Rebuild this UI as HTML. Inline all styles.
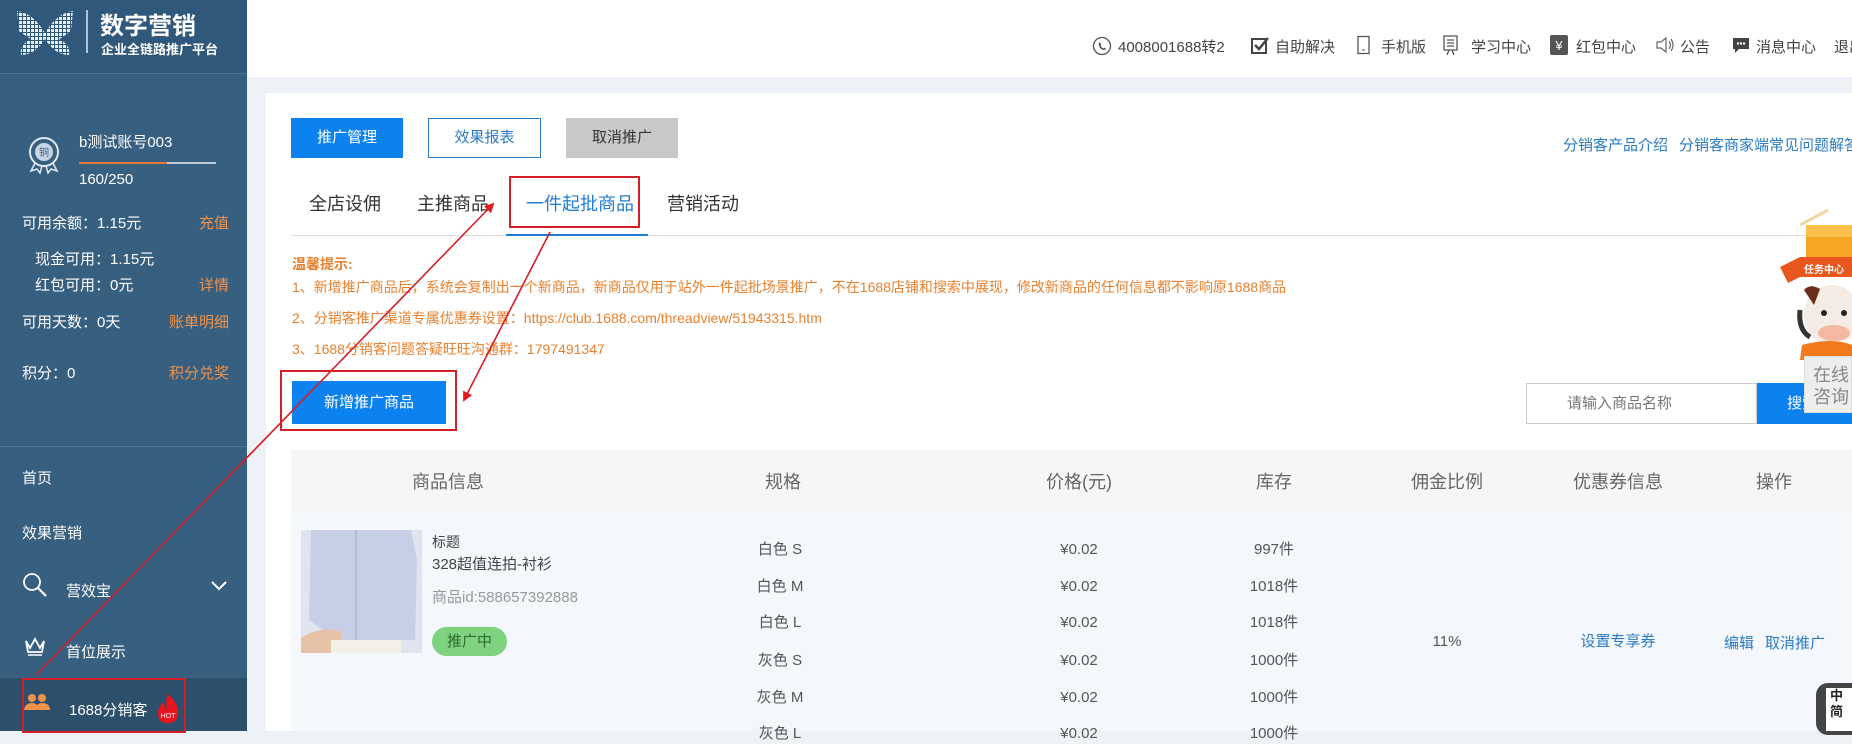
<!DOCTYPE html>
<html><head><meta charset="utf-8">
<style>
*{margin:0;padding:0;box-sizing:border-box}
body{width:1852px;height:731px;overflow:hidden;position:relative;background:#eef1f6;font-family:"Liberation Sans","Noto Sans CJK SC",sans-serif;color:#333}
.a{position:absolute;white-space:nowrap}
#side{position:absolute;left:0;top:0;width:247px;height:731px;background:#375f80}
#logo{position:absolute;left:0;top:0;width:247px;height:74px;background:#2f587a;border-bottom:1px solid #4a7496}
.sw{color:#fff;font-size:15px}
.or{color:#f0924a;font-size:15px}
.hd{font-size:15px;color:#444}
.tab{font-size:18px;color:#333}
.tip{font-size:14px;color:#e8802e}
.th{font-size:18px;color:#666;transform:translateX(-50%)}
.td{font-size:15px;color:#555;transform:translateX(-50%);line-height:20px;height:20px}
.lk{color:#2a7bc4}
</style></head><body>
<div id="side">
 <div id="logo">
  <svg class="a" style="left:15px;top:9px" width="60" height="48" viewBox="0 0 60 48">
   <defs><pattern id="d" width="4" height="4" patternUnits="userSpaceOnUse"><rect width="3" height="3" fill="#e8eef5"/></pattern>
   <clipPath id="b"><path d="M2 2 Q18 4 30 24 Q42 4 58 2 L56 22 Q48 28 44 30 Q56 36 54 46 Q40 46 30 30 Q20 46 6 46 Q4 36 16 30 Q12 28 4 22Z"/></clipPath></defs>
   <rect width="60" height="48" fill="url(#d)" clip-path="url(#b)"/>
  </svg>
  <div class="a" style="left:86px;top:10px;width:2px;height:43px;background:#a9c3da"></div>
  <div class="a" style="left:100px;top:6px;font-size:24px;font-weight:bold;color:#fff">数字营销</div>
  <div class="a" style="left:101px;top:39px;font-size:13px;font-weight:bold;color:#fff">企业全链路推广平台</div>
 </div>
 <svg class="a" style="left:27px;top:135px" width="34" height="40" viewBox="0 0 34 40"><circle cx="17" cy="17" r="14" fill="none" stroke="#dfe8f0" stroke-width="2"/><circle cx="17" cy="17" r="9" fill="#c7d5e2"/><text x="17" y="21" font-size="10" text-anchor="middle" fill="#375f80" font-family="Noto Sans CJK SC">铜</text><path d="M8 28 L4 36 L10 34 L13 38 L15 31 M26 28 L30 36 L24 34 L21 38 L19 31" fill="none" stroke="#dfe8f0" stroke-width="1.5"/></svg>
 <div class="a sw" style="left:79px;top:131px">b测试账号003</div>
 <div class="a" style="left:79px;top:162px;width:137px;height:2px;background:#b9cddd"></div>
 <div class="a" style="left:79px;top:162px;width:88px;height:2px;background:#e0783a"></div>
 <div class="a sw" style="left:79px;top:171px">160/250</div>
 <div class="a sw" style="left:22px;top:212px">可用余额：1.15元</div><div class="a or" style="left:199px;top:212px">充值</div>
 <div class="a sw" style="left:35px;top:248px">现金可用：1.15元</div>
 <div class="a sw" style="left:35px;top:274px">红包可用：0元</div><div class="a or" style="left:199px;top:274px">详情</div>
 <div class="a sw" style="left:22px;top:311px">可用天数：0天</div><div class="a or" style="left:169px;top:311px">账单明细</div>
 <div class="a sw" style="left:22px;top:362px">积分：0</div><div class="a or" style="left:169px;top:362px">积分兑奖</div>
 <div class="a" style="left:0;top:446px;width:247px;height:1px;background:#4d7798"></div>
 <div class="a sw" style="left:22px;top:467px">首页</div>
 <div class="a sw" style="left:22px;top:522px">效果营销</div>
 <svg class="a" style="left:22px;top:572px" width="26" height="26" viewBox="0 0 26 26"><circle cx="10" cy="10" r="8" fill="none" stroke="#fff" stroke-width="1.8"/><path d="M16 16 L24 24" stroke="#fff" stroke-width="2.2"/></svg>
 <div class="a sw" style="left:66px;top:580px">营效宝</div>
 <svg class="a" style="left:210px;top:580px" width="18" height="12"><path d="M2 2 L9 9 L16 2" fill="none" stroke="#fff" stroke-width="2"/></svg>
 <svg class="a" style="left:24px;top:636px" width="22" height="20" viewBox="0 0 22 20"><path d="M2 5 L6 12 L11 3 L16 12 L20 5 L18 16 L4 16Z" fill="none" stroke="#fff" stroke-width="1.8"/><line x1="4" y1="19" x2="18" y2="19" stroke="#fff" stroke-width="1.5"/></svg>
 <div class="a sw" style="left:66px;top:641px">首位展示</div>
 <div class="a" style="left:0;top:678px;width:247px;height:53px;background:#2c4f6c"></div>
 <svg class="a" style="left:24px;top:693px" width="26" height="18" viewBox="0 0 26 18"><circle cx="8" cy="5" r="4" fill="#f0924a"/><circle cx="18" cy="5" r="4" fill="#f0924a"/><path d="M0 17 Q1 10 8 10 Q15 10 14 17Z M12 17 Q12 10 18 10 Q26 10 26 17Z" fill="#f0924a"/></svg>
 <div class="a sw" style="left:69px;top:699px">1688分销客</div>
 <svg class="a" style="left:155px;top:692px" width="26" height="32" viewBox="0 0 26 32"><path d="M13 2 Q24 12 23 22 Q22 31 13 31 Q3 31 3 22 Q3 14 9 10 Q9 16 12 17 Q10 8 13 2Z" fill="#e8141b"/><text x="13" y="26" font-size="7" text-anchor="middle" fill="#fff">HOT</text></svg>
 <div class="a" style="left:22px;top:678px;width:164px;height:55px;border:2px solid #d31f26"></div>
</div>

<div class="a" style="left:247px;top:0;width:1605px;height:77px;background:#fff"></div>
<svg class="a" style="left:1092px;top:36px" width="20" height="20"><circle cx="10" cy="10" r="8.5" fill="none" stroke="#555" stroke-width="1.3"/><path d="M7 6 Q6 10 9 13 Q12 15 14 13 L12.5 11.5 L11 12.5 Q9 11 8.5 9.5 L9.5 8.2Z" fill="#555"/></svg>
<div class="a hd" style="left:1118px;top:36px">4008001688转2</div>
<svg class="a" style="left:1250px;top:35px" width="20" height="20"><rect x="2" y="4" width="14" height="14" fill="none" stroke="#444" stroke-width="2"/><path d="M5 10 L9 14 L18 3" fill="none" stroke="#444" stroke-width="2.5"/></svg>
<div class="a hd" style="left:1275px;top:36px">自助解决</div>
<svg class="a" style="left:1356px;top:35px" width="16" height="20"><rect x="2" y="1.5" width="11" height="17" fill="none" stroke="#555" stroke-width="1.3"/><line x1="6" y1="15" x2="9" y2="15" stroke="#555"/></svg>
<div class="a hd" style="left:1381px;top:36px">手机版</div>
<svg class="a" style="left:1442px;top:34px" width="18" height="22"><path d="M2 2 H15 V16 H2Z M5 6 H12 M5 9 H12 M5 12 H12 M7 16 L5 21 M10 16 L12 21" fill="none" stroke="#555" stroke-width="1.3"/></svg>
<div class="a hd" style="left:1471px;top:36px">学习中心</div>
<svg class="a" style="left:1550px;top:35px" width="18" height="20"><rect width="18" height="20" rx="2" fill="#555"/><text x="9" y="15" font-size="13" text-anchor="middle" fill="#fff">¥</text></svg>
<div class="a hd" style="left:1576px;top:36px">红包中心</div>
<svg class="a" style="left:1655px;top:36px" width="20" height="18"><path d="M2 6 H6 L11 2 V16 L6 12 H2Z M14 5 Q17 9 14 13 M16 3 Q20 9 16 15" fill="none" stroke="#666" stroke-width="1.2"/></svg>
<div class="a hd" style="left:1680px;top:36px">公告</div>
<svg class="a" style="left:1731px;top:36px" width="20" height="18"><path d="M2 2 H18 V13 H8 L4 17 V13 H2Z" fill="#444"/><circle cx="7" cy="7.5" r="1.2" fill="#fff"/><circle cx="10" cy="7.5" r="1.2" fill="#fff"/><circle cx="13" cy="7.5" r="1.2" fill="#fff"/></svg>
<div class="a hd" style="left:1756px;top:36px">消息中心</div>
<div class="a hd" style="left:1834px;top:36px">退出</div>

<div class="a" style="left:266px;top:93px;width:1586px;height:638px;background:#fff"></div>
<div class="a" style="left:291px;top:118px;width:112px;height:40px;background:#0c82f0;color:#fff;font-size:15px;text-align:center;line-height:40px">推广管理</div>
<div class="a" style="left:428px;top:118px;width:113px;height:40px;border:1px solid #2a7bc4;color:#2a7bc4;font-size:15px;text-align:center;line-height:38px">效果报表</div>
<div class="a" style="left:566px;top:118px;width:112px;height:40px;background:#c8c8c8;color:#333;font-size:15px;text-align:center;line-height:40px">取消推广</div>
<div class="a lk" style="left:1563px;top:134px;font-size:15px">分销客产品介绍</div>
<div class="a lk" style="left:1679px;top:134px;font-size:15px">分销客商家端常见问题解答</div>

<div class="a tab" style="left:309px;top:190px">全店设佣</div>
<div class="a tab" style="left:417px;top:190px">主推商品</div>
<div class="a tab" style="left:526px;top:190px;color:#1f7cd4">一件起批商品</div>
<div class="a tab" style="left:667px;top:190px">营销活动</div>
<div class="a" style="left:291px;top:235px;width:1561px;height:1px;background:#ddd"></div>
<div class="a" style="left:506px;top:234px;width:142px;height:2px;background:#1f7cd4"></div>
<div class="a" style="left:509px;top:176px;width:131px;height:52px;border:2px solid #d31f26"></div>

<div class="a tip" style="left:292px;top:254px;font-weight:bold">温馨提示:</div>
<div class="a tip" style="left:292px;top:277px">1、新增推广商品后，系统会复制出一个新商品，新商品仅用于站外一件起批场景推广，不在1688店铺和搜索中展现，修改新商品的任何信息都不影响原1688商品</div>
<div class="a tip" style="left:292px;top:308px">2、分销客推广渠道专属优惠券设置：https://club.1688.com/threadview/51943315.htm</div>
<div class="a tip" style="left:292px;top:339px">3、1688分销客问题答疑旺旺沟通群：1797491347</div>

<div class="a" style="left:292px;top:381px;width:154px;height:43px;background:#0c82f0;color:#fff;font-size:15px;text-align:center;line-height:43px">新增推广商品</div>
<div class="a" style="left:280px;top:370px;width:177px;height:61px;border:2px solid #d31f26"></div>

<div class="a" style="left:1526px;top:383px;width:231px;height:41px;border:1px solid #ccc;background:#fff;color:#777;font-size:15px;line-height:39px;padding-left:40px">请输入商品名称</div>
<div class="a" style="left:1757px;top:383px;width:95px;height:41px;background:#0c82f0;color:#fff;font-size:15px;line-height:41px;padding-left:30px">搜索</div>

<div class="a" style="left:291px;top:450px;width:1561px;height:60px;background:#f6f6f6"></div>
<div class="a" style="left:291px;top:510px;width:1561px;height:221px;background:#f4f7fb"></div>
<div class="a th" style="left:448px;top:468px">商品信息</div>
<div class="a th" style="left:783px;top:468px">规格</div>
<div class="a th" style="left:1079px;top:468px">价格(元)</div>
<div class="a th" style="left:1274px;top:468px">库存</div>
<div class="a th" style="left:1447px;top:468px">佣金比例</div>
<div class="a th" style="left:1618px;top:468px">优惠券信息</div>
<div class="a th" style="left:1774px;top:468px">操作</div>

<svg class="a" style="left:301px;top:530px" width="121" height="123" viewBox="0 0 121 123"><rect width="121" height="123" fill="#dfe4ef"/><path d="M10 0 H110 L116 30 L114 110 H96 L98 123 H20 L22 100 L8 90Z" fill="#c6cfe6"/><path d="M55 0 V110" stroke="#b2bcd8" stroke-width="2"/><path d="M0 108 Q20 95 40 102 L40 123 H0Z" fill="#e6c2a6"/><path d="M30 110 H100 V123 H30Z" fill="#f2efe6"/></svg>
<div class="a" style="left:432px;top:532px;font-size:14px;color:#444">标题</div>
<div class="a" style="left:432px;top:553px;font-size:15px;color:#444">328超值连拍-衬衫</div>
<div class="a" style="left:432px;top:586px;font-size:15px;color:#999">商品id:588657392888</div>
<div class="a" style="left:432px;top:627px;width:75px;height:29px;border-radius:15px;background:#7fd37f;color:#2f6a2f;font-size:15px;text-align:center;line-height:29px">推广中</div>

<div class="a td" style="left:780px;top:540px">白色 S</div><div class="a td" style="left:1079px;top:540px">¥0.02</div><div class="a td" style="left:1274px;top:540px">997件</div>
<div class="a td" style="left:780px;top:577px">白色 M</div><div class="a td" style="left:1079px;top:577px">¥0.02</div><div class="a td" style="left:1274px;top:577px">1018件</div>
<div class="a td" style="left:780px;top:613px">白色 L</div><div class="a td" style="left:1079px;top:613px">¥0.02</div><div class="a td" style="left:1274px;top:613px">1018件</div>
<div class="a td" style="left:780px;top:651px">灰色 S</div><div class="a td" style="left:1079px;top:651px">¥0.02</div><div class="a td" style="left:1274px;top:651px">1000件</div>
<div class="a td" style="left:780px;top:688px">灰色 M</div><div class="a td" style="left:1079px;top:688px">¥0.02</div><div class="a td" style="left:1274px;top:688px">1000件</div>
<div class="a td" style="left:780px;top:724px">灰色 L</div><div class="a td" style="left:1079px;top:724px">¥0.02</div><div class="a td" style="left:1274px;top:724px">1000件</div>
<div class="a td" style="left:1447px;top:632px">11%</div>
<div class="a td lk" style="left:1618px;top:632px">设置专享券</div>
<div class="a lk" style="left:1724px;top:632px;font-size:15px">编辑</div>
<div class="a lk" style="left:1765px;top:632px;font-size:15px">取消推广</div>

<svg class="a" style="left:1780px;top:205px" width="72" height="155" viewBox="0 0 72 155">
 <path d="M20 20 L48 5" stroke="#f3d6a0" stroke-width="3"/>
 <rect x="26" y="20" width="50" height="36" rx="4" fill="#f6a623"/><rect x="26" y="20" width="50" height="12" fill="#f9c04a"/>
 <path d="M0 62 L20 52 H72 V72 H20 L8 78Z" fill="#e8581e"/>
 <text x="24" y="68" font-size="10" font-weight="bold" fill="#fff" font-family="Noto Sans CJK SC">任务中心</text>
 <ellipse cx="52" cy="110" rx="28" ry="30" fill="#f4ece4"/>
 <path d="M24 85 Q30 78 40 84 L34 100Z" fill="#6b2e1a"/>
 <circle cx="44" cy="108" r="3" fill="#222"/><circle cx="64" cy="108" r="3" fill="#222"/>
 <ellipse cx="54" cy="128" rx="16" ry="8" fill="#f2b9a0"/>
 <path d="M20 105 Q18 125 30 132" stroke="#333" stroke-width="5" fill="none"/>
 <path d="M22 140 Q52 132 72 140 V155 H20Z" fill="#f27a1a"/>
</svg>
<div class="a" style="left:1804px;top:356px;width:48px;height:57px;background:#eeeeee;border:1px solid #ddd;color:#888;font-size:18px;line-height:22px;padding:7px 0 0 8px;white-space:normal;overflow:hidden">在线<br>咨询</div>
<div class="a" style="left:1816px;top:683px;width:40px;height:52px;background:#444;border-radius:12px 0 0 12px"></div>
<div class="a" style="left:1826px;top:688px;width:26px;height:43px;background:#fff;font-size:13px;font-weight:bold;line-height:16px;color:#222;padding-left:4px;white-space:normal">中<br>简</div>

<svg class="a" style="left:0;top:0" width="1852" height="731">
 <defs><marker id="ah" markerWidth="10" markerHeight="10" refX="8" refY="5" orient="auto" markerUnits="userSpaceOnUse"><path d="M0 0 L10 5 L0 10Z" fill="#e01b1b"/></marker></defs>
 <line x1="36" y1="675" x2="493" y2="204" stroke="#d31f26" stroke-width="1.6" marker-end="url(#ah)"/>
 <line x1="550" y1="232" x2="464" y2="400" stroke="#d31f26" stroke-width="1.6" marker-end="url(#ah)"/>
</svg>
</body></html>
